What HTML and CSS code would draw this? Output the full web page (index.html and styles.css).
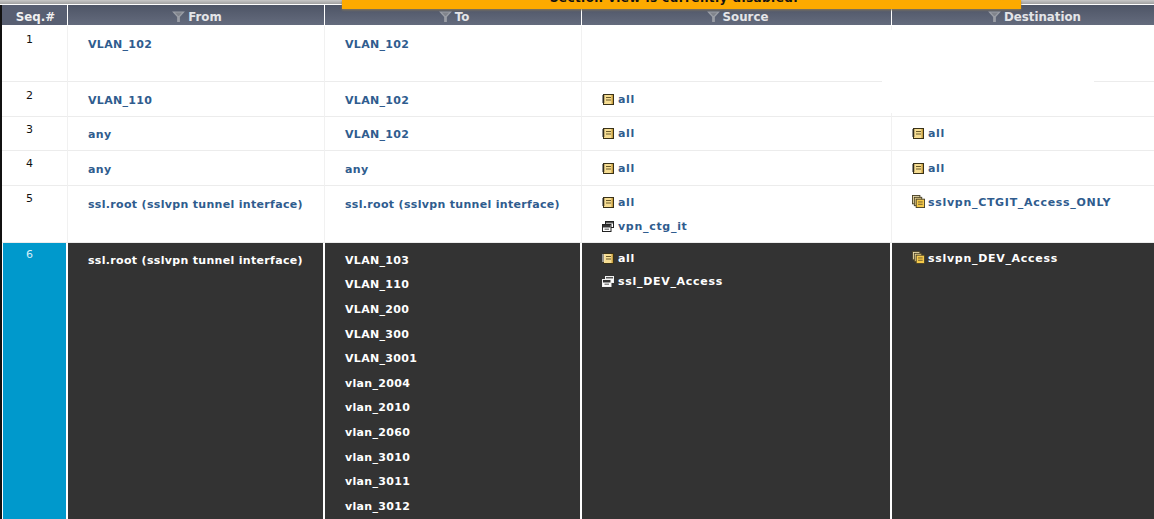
FILE: index.html
```html
<!DOCTYPE html>
<html lang="en">
<head>
<meta charset="utf-8">
<title>Policy</title>
<link rel="stylesheet" href="styles.css">
</head>
<body>
<svg class="defs" width="0" height="0" aria-hidden="true">
  <defs>
    <symbol id="i-addr" viewBox="0 0 12 11">
      <rect x="1.500" y="0.500" width="10" height="10" fill="#f6dd92" stroke="#3a3218"/>
      <path class="u-line" d="M0 2h2.500M0 4h2.500M0 6h2.500M0 8h2.500"/>
      <path d="M4 3.500h5M4 6h5" stroke="#6b5a2a"/>
      <rect x="9.500" y="1" width="1.500" height="9" fill="#c9a043"/>
    </symbol>
    <symbol id="i-user" viewBox="0 0 12 11">
      <rect class="u-line" x="3.500" y="0.500" width="8" height="6" fill="#fff"/>
      <rect x="4" y="1" width="7" height="1.500" fill="#555"/>
      <rect class="u-line" x="0.500" y="3.500" width="8.500" height="7" fill="#fff"/>
      <rect x="1" y="4" width="7.500" height="2.500" fill="#333"/>
      <rect x="2.500" y="7.500" width="4.500" height="1.500" fill="#888"/>
    </symbol>
    <symbol id="i-group" viewBox="0 0 14 14">
      <rect x="0.500" y="0.500" width="8" height="9" fill="#efe0b0" stroke="#4a4228"/>
      <rect x="2.500" y="2.500" width="8" height="9" fill="#ecd48c" stroke="#4a4228"/>
      <rect x="4.500" y="4.500" width="9" height="9" fill="#f5c94a" stroke="#4a4228"/>
      <path d="M6.500 7.500h5M6.500 10h5" stroke="#6b5a2a"/>
    </symbol>
    <symbol id="i-filter" viewBox="0 0 14 12">
      <path d="M0 0.500h14L8.500 6.500V12h-3V6.500Z" fill="#9a9ea6"/>
      <path d="M3 1.500h8L7.500 5.500h-1Z" fill="#80848c"/>
    </symbol>
  </defs>
</svg>
<div class="banner"><span class="banner-text">Section view is currently disabled.</span><span class="banner-close">»</span></div>
<div class="top-rule"></div>
<table class="policy">
  <colgroup>
    <col class="c-seq"><col class="c-from"><col class="c-to"><col class="c-src"><col class="c-dst">
  </colgroup>
  <thead>
    <tr>
      <th>Seq.#</th>
      <th><svg class="filter"><use href="#i-filter"/></svg>From</th>
      <th><svg class="filter"><use href="#i-filter"/></svg>To</th>
      <th><svg class="filter"><use href="#i-filter"/></svg>Source</th>
      <th><svg class="filter"><use href="#i-filter"/></svg>Destination</th>
    </tr>
  </thead>
  <tbody>
    <tr class="r1">
      <td class="seq">1</td>
      <td><div class="item">VLAN_102</div></td>
      <td><div class="item">VLAN_102</div></td>
      <td></td>
      <td></td>
    </tr>
    <tr class="r2">
      <td class="seq">2</td>
      <td><div class="item">VLAN_110</div></td>
      <td><div class="item">VLAN_102</div></td>
      <td><div class="item obj"><svg class="ico"><use href="#i-addr"/></svg>all</div></td>
      <td></td>
    </tr>
    <tr class="r3">
      <td class="seq">3</td>
      <td><div class="item">any</div></td>
      <td><div class="item">VLAN_102</div></td>
      <td><div class="item obj"><svg class="ico"><use href="#i-addr"/></svg>all</div></td>
      <td><div class="item obj"><svg class="ico"><use href="#i-addr"/></svg>all</div></td>
    </tr>
    <tr class="r4">
      <td class="seq">4</td>
      <td><div class="item">any</div></td>
      <td><div class="item">any</div></td>
      <td><div class="item obj"><svg class="ico"><use href="#i-addr"/></svg>all</div></td>
      <td><div class="item obj"><svg class="ico"><use href="#i-addr"/></svg>all</div></td>
    </tr>
    <tr class="r5">
      <td class="seq">5</td>
      <td><div class="item">ssl.root (sslvpn tunnel interface)</div></td>
      <td><div class="item">ssl.root (sslvpn tunnel interface)</div></td>
      <td><div class="item obj"><svg class="ico"><use href="#i-addr"/></svg>all</div><div class="item obj"><svg class="ico"><use href="#i-user"/></svg>vpn_ctg_it</div></td>
      <td><div class="item obj"><svg class="ico-g"><use href="#i-group"/></svg>sslvpn_CTGIT_Access_ONLY</div></td>
    </tr>
    <tr class="selected">
      <td class="seq">6</td>
      <td><div class="item">ssl.root (sslvpn tunnel interface)</div></td>
      <td>
        <div class="item">VLAN_103</div>
        <div class="item">VLAN_110</div>
        <div class="item">VLAN_200</div>
        <div class="item">VLAN_300</div>
        <div class="item">VLAN_3001</div>
        <div class="item">vlan_2004</div>
        <div class="item">vlan_2010</div>
        <div class="item">vlan_2060</div>
        <div class="item">vlan_3010</div>
        <div class="item">vlan_3011</div>
        <div class="item">vlan_3012</div>
      </td>
      <td><div class="item obj"><svg class="ico"><use href="#i-addr"/></svg>all</div><div class="item obj"><svg class="ico"><use href="#i-user"/></svg>ssl_DEV_Access</div></td>
      <td><div class="item obj"><svg class="ico-g"><use href="#i-group"/></svg>sslvpn_DEV_Access</div></td>
    </tr>
  </tbody>
</table>
<div class="mask"></div>
</body>
</html>
```
FILE: styles.css
```css
html, body {
  margin: 0;
  padding: 0;
  height: 519px;
  overflow: hidden;
  background: #fff;
  font-family: "DejaVu Sans", Verdana, sans-serif;
}
body { position: relative; --ic: #222; }
.defs { position: absolute; }
.u-line { stroke: var(--ic); }
.top-rule {
  height: 4px;
  background: linear-gradient(#c8c8c8, #a0a0a0);
  border-bottom: 1px solid #fff;
}
.banner {
  position: absolute;
  top: 0;
  left: 342px;
  width: 679px;
  height: 9px;
  background: #fdaa00;
  box-shadow: 0 1px 2px #8a7a55;
  overflow: hidden;
  z-index: 2;
  font-size: 12px;
  font-weight: bold;
  letter-spacing: 0.43px;
  text-align: center;
  color: #111;
  line-height: 0;
}
.banner-text { display: inline-block; position: relative; top: -2px; margin-right: 15px; }
.banner-close { position: absolute; right: 14px; top: -3px; color: #8a6a10; }
.mask {
  position: absolute;
  left: 882px;
  top: 30px;
  width: 212px;
  height: 83px;
  background: #fff;
}
.policy {
  table-layout: fixed;
  border-collapse: separate;
  border-spacing: 0;
  width: 1176px;
  font-size: 11px;
  border-left: 2px solid #111;
}
.c-seq { width: 66px; }
.c-from { width: 257px; }
.c-to { width: 257px; }
.c-src { width: 310px; }
.c-dst { width: 284px; }
thead tr { height: 21px; }
th {
  box-sizing: border-box;
  padding: 3px 0 0 2px;
  background: linear-gradient(#4e5566, #646b7d);
  color: #e4e5e8;
  font-size: 11.8px;
  font-weight: bold;
  text-align: center;
  border-right: 1px solid #fff;
  border-bottom: 1px solid #fff;
}
th:first-child { background: #585f72; color: #f0f0f0; }
.filter { width: 13px; height: 11px; margin-right: 3px; vertical-align: -1px; }
td {
  box-sizing: border-box;
  padding: 7px 0 0 20px;
  vertical-align: top;
  border-right: 1px solid #f1f1f1;
  border-bottom: 1px solid #ececec;
  color: #2f5c8e;
  font-weight: bold;
  letter-spacing: 0.32px;
}
td.seq {
  padding: 6px 10px 0 0;
  text-align: center;
  font-weight: normal;
  color: #111;
  letter-spacing: 0;
}
.r1 td.seq, .r2 td.seq { padding-top: 7px; }
.r3 td { padding-top: 6px; }
.r3 td.seq { padding-top: 6px; }
.r1 { height: 56px; }
.r2 { height: 35px; }
.r3 { height: 34px; }
.r4 { height: 35px; }
.r5 { height: 57px; }
.item { height: 24.6px; line-height: 24.6px; white-space: nowrap; }
.obj { letter-spacing: 0.7px; }
.obj:first-child { margin-top: -2px; }
.r2 .obj:first-child, .r3 .obj:first-child, .r4 .obj:first-child { margin-top: -1px; }
.obj + .obj { margin-top: -1px; }
.ico { width: 12px; height: 11px; margin-right: 4px; vertical-align: -2px; }
.ico-g { width: 13px; height: 13px; margin-right: 3px; vertical-align: -2px; }
.selected { --ic: #f2f2f2; height: 290px; }
.selected td {
  background: #333;
  color: #fff;
  border-right: 2px solid #fff;
  border-bottom: 0;
  padding-top: 5.9px;
}
.selected td.seq { background: #0099cc; color: #d5eef8; border-left: 1px solid #fff; padding-top: 5px; }
```
